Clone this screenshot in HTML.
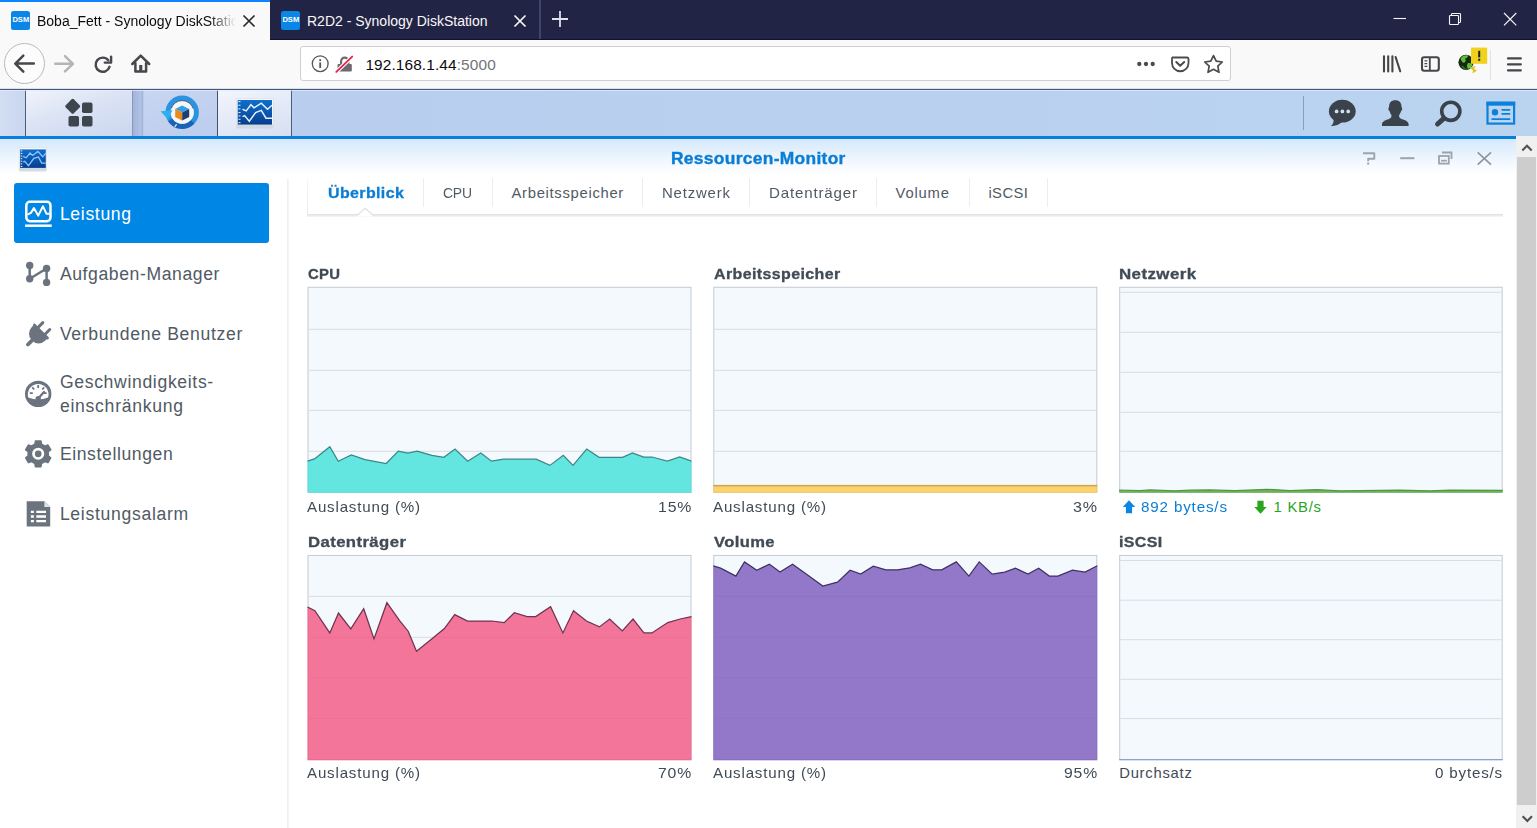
<!DOCTYPE html>
<html><head><meta charset="utf-8"><title>Ressourcen-Monitor</title>
<style>
html,body{margin:0;padding:0;}
body{width:1537px;height:828px;overflow:hidden;background:#fff;position:relative;font-family:"Liberation Sans",sans-serif;}
.abs{position:absolute;}
.t{position:absolute;white-space:nowrap;line-height:1;}
/* browser chrome */
#tabbar{left:0;top:0;width:1537px;height:40px;background:#222445;}
#tab1{left:0;top:0;width:270px;height:40px;background:#f9f9fa;}
#tab1line{left:0;top:0;width:270px;height:2px;background:#0a84ff;}
.fav{width:19.300px;height:19.300px;border-radius:2.500px;background:#0a86e6;}
.fav span{position:absolute;left:0;top:5.100px;width:19.300px;text-align:center;font-size:7.600px;font-weight:bold;color:#fff;letter-spacing:0px;line-height:8px;}
.tabtxt{font-size:14px;top:13.6px;padding-bottom:5px;}
#navbar{left:0;top:40px;width:1537px;height:48px;background:#f9f9fa;}
#navline{left:0;top:88px;width:1537px;height:1px;background:#e0e0e3;}
#urlbar{left:300px;top:46px;width:929px;height:33px;background:#fff;border:1px solid #cfcfd2;border-radius:3px;}
/* DSM */
#taskbar{left:0;top:89px;width:1537px;height:47px;background:linear-gradient(to right,#b9cdee,#b9d0ef 50%,#bad4f0);}
#tbline{left:0;top:136px;width:1516px;height:3px;background:#0a7fd9;}
#winhead{left:0;top:139px;width:1516px;height:40px;background:linear-gradient(#d5e9fc,#e6f2fd 35%,#f8fbff 70%,#ffffff 92%);}
.side{font-size:17.6px;color:#505a64;left:60px;letter-spacing:.62px;}
.tab{font-size:14.8px;color:#505a64;top:185.7px;letter-spacing:.45px;}
.ct{font-size:14.4px;font-weight:bold;color:#414b55;-webkit-text-stroke:.3px #414b55;letter-spacing:.25px;}
.cl{font-size:14.8px;color:#414b55;letter-spacing:.5px;}
.cr{font-size:14.8px;color:#414b55;letter-spacing:.5px;text-align:right;}
.sep{position:absolute;top:178px;width:1px;height:29px;background:#ebedf0;}
#tb1{left:327.7px !important;letter-spacing:0.35px;width:auto !important;text-align:left !important;transform:scaleX(1.0792);transform-origin:0 50%;}
#tb2{left:443.0px !important;letter-spacing:-0.20px;width:auto !important;text-align:left !important;transform:scaleX(0.9400);transform-origin:0 50%;}
#tb3{left:511.5px !important;letter-spacing:0.70px;width:auto !important;text-align:left !important;}
#tb4{left:661.7px !important;letter-spacing:0.80px;width:auto !important;text-align:left !important;transform:scaleX(1.0108);transform-origin:0 50%;}
#tb5{left:768.6px !important;letter-spacing:0.80px;width:auto !important;text-align:left !important;transform:scaleX(1.0227);transform-origin:0 50%;}
#tb6{left:895.6px !important;letter-spacing:0.80px;width:auto !important;text-align:left !important;}
#tb7{left:988.4px !important;letter-spacing:0.44px;width:auto !important;text-align:left !important;}
#wtitle{left:670.8px !important;letter-spacing:0.35px;width:auto !important;text-align:left !important;transform:scaleX(1.0949);transform-origin:0 50%;}
#c1{left:307.6px !important;letter-spacing:0.35px;width:auto !important;text-align:left !important;transform:scaleX(1.0325);transform-origin:0 50%;}
#c2{left:713.6px !important;letter-spacing:0.35px;width:auto !important;text-align:left !important;transform:scaleX(1.1101);transform-origin:0 50%;}
#c3{left:1119.4px !important;letter-spacing:0.35px;width:auto !important;text-align:left !important;transform:scaleX(1.1746);transform-origin:0 50%;}
#c4{left:307.6px !important;letter-spacing:0.35px;width:auto !important;text-align:left !important;transform:scaleX(1.1616);transform-origin:0 50%;}
#c5{left:713.5px !important;letter-spacing:0.35px;width:auto !important;text-align:left !important;transform:scaleX(1.1505);transform-origin:0 50%;}
#c6{left:1119.3px !important;letter-spacing:0.35px;width:auto !important;text-align:left !important;transform:scaleX(1.1104);transform-origin:0 50%;}
#l1{left:307.4px !important;letter-spacing:0.80px;width:auto !important;text-align:left !important;transform:scaleX(1.0204);transform-origin:0 50%;}
#l4{left:307.4px !important;letter-spacing:0.80px;width:auto !important;text-align:left !important;transform:scaleX(1.0204);transform-origin:0 50%;}
#l2{left:713.4px !important;letter-spacing:0.80px;width:auto !important;text-align:left !important;transform:scaleX(1.0204);transform-origin:0 50%;}
#l5{left:713.4px !important;letter-spacing:0.80px;width:auto !important;text-align:left !important;transform:scaleX(1.0204);transform-origin:0 50%;}
#r1{left:658.0px !important;letter-spacing:0.80px;width:auto !important;text-align:left !important;transform:scaleX(1.0697);transform-origin:0 50%;}
#r2{left:1072.9px !important;letter-spacing:0.80px;width:auto !important;text-align:left !important;transform:scaleX(1.0860);transform-origin:0 50%;}
#r4{left:658.1px !important;letter-spacing:0.80px;width:auto !important;text-align:left !important;transform:scaleX(1.0633);transform-origin:0 50%;}
#r5{left:1063.8px !important;letter-spacing:0.80px;width:auto !important;text-align:left !important;transform:scaleX(1.0633);transform-origin:0 50%;}
#n1{left:1140.5px !important;letter-spacing:0.80px;width:auto !important;text-align:left !important;transform:scaleX(1.0276);transform-origin:0 50%;}
#n2{left:1273.5px !important;letter-spacing:0.78px;width:auto !important;text-align:left !important;}
#l6{left:1119.2px !important;letter-spacing:0.76px;width:auto !important;text-align:left !important;}
#r6{left:1434.9px !important;letter-spacing:0.80px;width:auto !important;text-align:left !important;transform:scaleX(1.0241);transform-origin:0 50%;}
#s1{left:59.9px !important;letter-spacing:0.67px;width:auto !important;text-align:left !important;}
#s2{left:59.9px !important;letter-spacing:0.59px;width:auto !important;text-align:left !important;}
#s3{left:59.9px !important;letter-spacing:0.68px;width:auto !important;text-align:left !important;}
#s4{left:59.9px !important;letter-spacing:0.66px;width:auto !important;text-align:left !important;}
#s4b{left:59.9px !important;letter-spacing:0.73px;width:auto !important;text-align:left !important;}
#s5{left:59.9px !important;letter-spacing:0.60px;width:auto !important;text-align:left !important;}
#s6{left:59.9px !important;letter-spacing:0.69px;width:auto !important;text-align:left !important;}
</style></head><body>

<!-- ===== Firefox tab bar ===== -->
<div class="abs" id="tabbar"></div>
<div class="abs" id="tab1"></div>
<div class="abs" id="tab1line"></div>
<div class="abs fav" style="left:11.200px;top:11.200px;"><span>DSM</span></div>
<div class="t tabtxt" id="tt1" style="left:37px;color:#0c0c0d;width:199px;overflow:hidden;-webkit-mask-image:linear-gradient(to right,#000 172px,transparent 199px);">Boba_Fett - Synology DiskStation</div>
<svg class="abs" style="left:242.200px;top:13.900px" width="14" height="14" viewBox="0 0 14 14"><path d="M1.5 1.5 L12.5 12.5 M12.5 1.5 L1.5 12.5" stroke="#2a2a2e" stroke-width="1.7" fill="none"/></svg>

<div class="abs fav" style="left:281.200px;top:11.200px;"><span>DSM</span></div>
<div class="t tabtxt" id="tt2" style="left:307px;color:#f9f9fa;">R2D2 - Synology DiskStation</div>
<svg class="abs" style="left:512.500px;top:13.900px" width="14" height="14" viewBox="0 0 14 14"><path d="M1.5 1.5 L12.5 12.5 M12.5 1.5 L1.5 12.5" stroke="#f9f9fa" stroke-width="1.7" fill="none"/></svg>
<div class="abs" style="left:270px;top:39px;width:1267px;height:1px;background:#10112a;"></div><div class="abs" style="left:539px;top:0;width:2px;height:39px;background:#40436a;"></div>
<svg class="abs" style="left:551px;top:10px" width="18" height="18" viewBox="0 0 18 18"><path d="M9 1 V17 M1 9 H17" stroke="#e2e2e8" stroke-width="1.800" fill="none"/></svg>
<!-- window controls -->
<svg class="abs" style="left:1390px;top:8px" width="140" height="24" viewBox="0 0 140 24">
 <path d="M3.500 10.500 H16" stroke="#f4f4f8" stroke-width="1.100"/>
 <rect x="59.500" y="7.500" width="9" height="9" rx=".8" stroke="#f4f4f8" stroke-width="1.100" fill="none"/>
 <path d="M61.500 7.500 V6.300 a.8 .8 0 0 1 .8 -.8 H69.700 a.8 .8 0 0 1 .8 .8 V13.700 a.8 .8 0 0 1 -.8 .8 H68.500" stroke="#f4f4f8" stroke-width="1.100" fill="none"/>
 <path d="M114 5 L126.300 17.300 M126.300 5 L114 17.300" stroke="#f4f4f8" stroke-width="1.200" fill="none"/>
</svg>

<!-- ===== nav bar ===== -->
<div class="abs" id="navbar"></div>
<div class="abs" id="navline"></div>
<div class="abs" style="left:4px;top:43px;width:39px;height:39px;border:1px solid #b9b9bc;border-radius:50%;background:#fcfcfd;"></div>
<svg class="abs" style="left:0;top:40px" width="170" height="48" viewBox="0 0 170 48">
 <path d="M33.800 23.600 H15.600 M23.300 15.600 L15.300 23.600 L23.300 31.600" stroke="#47474c" stroke-width="2.500" fill="none" stroke-linecap="round" stroke-linejoin="round"/>
 <path d="M55.300 23.800 H72.800 M65 16.200 L72.900 23.800 L65 31.400" stroke="#b4b4b7" stroke-width="2.500" fill="none" stroke-linecap="round" stroke-linejoin="round"/>
 <path d="M108.300 20.300 A7.100 7.100 0 1 0 109.500 26.800" stroke="#47474c" stroke-width="2.400" fill="none" stroke-linecap="round"/>
 <path d="M104.800 22.600 H111.100 V16.600" stroke="#47474c" stroke-width="2.400" fill="none" stroke-linejoin="round" stroke-linecap="round"/>
 <path d="M132.300 24 L140.700 15.600 L149.200 24 M135.400 23.200 V31.600 H146.100 V23.200" stroke="#47474c" stroke-width="2.500" fill="none" stroke-linejoin="round" stroke-linecap="round"/>
 <rect x="139.200" y="25" width="3.100" height="6" fill="#47474c"/>
</svg>
<div class="abs" id="urlbar"></div>
<svg class="abs" style="left:308px;top:52px" width="50" height="24" viewBox="0 0 50 24">
 <circle cx="12.2" cy="11.7" r="7.9" stroke="#55555a" stroke-width="1.3" fill="none"/>
 <rect x="11.3" y="10.4" width="1.8" height="5.6" fill="#55555a"/><rect x="11.3" y="7.2" width="1.8" height="1.9" fill="#55555a"/>
 <rect x="29.5" y="12" width="14.3" height="7.6" rx="1" fill="#6a6a6f"/>
 <path d="M33.1 12.5 V9.3 a3.6 3.6 0 0 1 7.2 0 V12.5" stroke="#6a6a6f" stroke-width="2.2" fill="none"/>
 <path d="M28.3 19.9 L44.2 4.6" stroke="#fff" stroke-width="4"/>
 <path d="M28.3 19.9 L44.2 4.6" stroke="#e22850" stroke-width="1.9" stroke-linecap="round"/>
</svg>
<div class="t" id="url" style="left:365.4px;top:57.2px;font-size:15.4px;color:#0c0c0d;letter-spacing:.12px;">192.168.1.44<span style="color:#737378">:5000</span></div>
<svg class="abs" style="left:1130px;top:52px" width="100" height="24" viewBox="0 0 100 24">
 <circle cx="9.3" cy="12" r="2.15" fill="#4a4a4f"/><circle cx="16" cy="12" r="2.15" fill="#4a4a4f"/><circle cx="22.7" cy="12" r="2.15" fill="#4a4a4f"/>
 <path d="M42.5 5.5 H57 a1.5 1.5 0 0 1 1.5 1.5 V11 a8 8 0 0 1 -16.5 0 V7 a1.5 1.5 0 0 1 .5 -1.5 z" stroke="#4a4a4f" stroke-width="1.8" fill="none"/>
 <path d="M46.3 10 L50.2 13.7 L54.2 10" stroke="#4a4a4f" stroke-width="2" fill="none" stroke-linecap="round" stroke-linejoin="round"/>
 <path d="M83.5 3.6 L86.2 9.2 L92.3 10 L87.8 14.2 L89 20.3 L83.5 17.3 L78 20.3 L79.2 14.2 L74.7 10 L80.8 9.2 Z" stroke="#4a4a4f" stroke-width="1.7" fill="none" stroke-linejoin="round"/>
</svg>
<svg class="abs" style="left:1378px;top:46px" width="155" height="36" viewBox="0 0 155 36">
 <path d="M6 10.300 V25.500 M10.200 10.300 V25.500 M14.400 10.300 V25.500 M17.600 11 L22.200 25.300" stroke="#45454a" stroke-width="2.100" fill="none" stroke-linecap="round"/>
 <rect x="44" y="11.300" width="16.800" height="13.400" rx="2.200" stroke="#45454a" stroke-width="2.100" fill="none"/>
 <path d="M51.800 11.300 V24.700" stroke="#45454a" stroke-width="1.800"/><path d="M46.500 14.800 H49.300 M46.500 17.600 H49.300 M46.500 20.400 H49.300" stroke="#45454a" stroke-width="1.200"/>
 <circle cx="88" cy="16.300" r="7.600" fill="#14290f"/>
 <path d="M82.500 12.500 q3 -4.500 8 -3 q-1 2.500 -3.500 3 q1.500 2 -.5 4 q-2.500 1 -4 -4 z M90 17 q3.500 -.5 4.500 2 q-1.500 3.500 -4.500 4 q-2 -3 0 -6 z" fill="#5fbf3a"/>
 <path d="M84 20 q2 3 5 3.500" stroke="#2f6f22" stroke-width="1.600" fill="none"/>
 <path d="M91.500 21.500 l6 -1.500 l-1.500 3 l3 1.500 l-4.500 3 l.5 -3.300 z" fill="#e3c01a"/>
 <rect x="93" y="1.600" width="16.200" height="16.200" fill="#f0d11c"/><rect x="100.200" y="4.800" width="2" height="6.600" fill="#222"/><rect x="100.200" y="12.700" width="2" height="2.100" fill="#222"/>
 <path d="M112.500 4 V34" stroke="#e2e2e6" stroke-width="1"/>
 <path d="M130 12.400 H142.800 M130 18.400 H142.800 M130 24.400 H142.800" stroke="#45454a" stroke-width="2.200" stroke-linecap="round"/>
</svg>

<!-- ===== DSM taskbar ===== -->
<div class="abs" id="taskbar"></div>
<div class="abs" style="left:0;top:89px;width:25px;height:47px;background:linear-gradient(to right,#d3def3,#c9d6f0);"></div><div class="abs" style="left:25px;top:89px;width:1px;height:47px;background:#4f5c78;"></div>
<div class="abs" style="left:26px;top:89px;width:106px;height:47px;background:linear-gradient(160deg,#f1f4fb,#dbe3f4 45%,#cbd7ef);"></div>
<div class="abs" style="left:132px;top:89px;width:11px;height:47px;background:linear-gradient(to right,#7a8cb0 0,#a3b5d8 14%,#b2c3e4 80%,#9fb1d4 100%);"></div>
<div class="abs" style="left:144px;top:89px;width:1px;height:47px;background:#5c6985;"></div>
<div class="abs" style="left:144px;top:89px;width:73px;height:47px;background:linear-gradient(160deg,#c9d6f1,#c0d0ee 60%,#bccdee);"></div>
<div class="abs" style="left:217px;top:89px;width:1px;height:47px;background:#465068;"></div>
<div class="abs" style="left:218px;top:89px;width:73px;height:47px;background:linear-gradient(160deg,#f3f6fc,#e4eaf7 50%,#d6dff2);"></div>
<div class="abs" style="left:291px;top:89px;width:1px;height:47px;background:#4f5c78;"></div>
<div class="abs" style="left:0;top:88.600px;width:1537px;height:1.200px;background:#3f5888;"></div><div class="abs" style="left:0;top:90px;width:1537px;height:1px;background:#e6edf9;opacity:.75"></div>
<!-- main menu icon -->
<svg class="abs" style="left:60px;top:95.700px" width="40" height="36" viewBox="0 0 40 36">
 <rect x="-5.700" y="-5.700" width="11.400" height="11.400" rx="1.600" transform="translate(12.700,10.300) rotate(45)" fill="#3d454e"/>
 <rect x="22" y="6.5" width="10.5" height="10.5" rx="1.8" fill="#3d454e"/>
 <rect x="8.5" y="20" width="10.5" height="10.5" rx="1.8" fill="#3d454e"/>
 <rect x="22" y="20" width="10.5" height="10.5" rx="1.8" fill="#3d454e"/>
</svg>
<!-- hyper backup icon -->
<svg class="abs" style="left:155px;top:90px" width="52" height="46" viewBox="155 90 52 46">
 <circle cx="182.200" cy="112.200" r="14.100" fill="none" stroke="#2b93e0" stroke-width="5.200"/>
 <path d="M170.300 119.800 A14.100 14.100 0 0 0 192.500 121.800" fill="none" stroke="#1b62b4" stroke-width="5.200"/>
 <circle cx="182.200" cy="112.200" r="11.600" fill="#f3f6fb"/>
 <path d="M171.200 108.500 A11.600 11.600 0 0 1 193.200 108.500" fill="none" stroke="#26384f" stroke-width="1" opacity=".75"/>
 <path d="M160.600 111.200 L172.400 110.200 L168 119.400 Z" fill="#2db0f2"/>
 <path d="M182.200 105.400 L189.200 108.900 L182.200 112.400 L175.200 108.900 Z" fill="#3a9fe2"/>
 <path d="M175.200 108.900 L182.200 112.400 V120.600 L175.200 117.100 Z" fill="#ea8a1a"/>
 <path d="M189.200 108.900 L182.200 112.400 V120.600 L189.200 117.100 Z" fill="#1e3f6f"/>
 <path d="M174.800 126.800 L176.600 124.300" stroke="#e8f3fd" stroke-width="1.200"/>
</svg>
<!-- resource monitor icon (taskbar) -->
<svg class="abs" style="left:232px;top:94px" width="44" height="37" viewBox="232 94 44 37"><defs><linearGradient id="mg1" x1="0" y1="0" x2="0" y2="1"><stop offset="0" stop-color="#0f6fcb"/><stop offset=".55" stop-color="#0b56ac"/><stop offset="1" stop-color="#073c8d"/></linearGradient></defs><rect x="236.9" y="126.2" width="35.7" height="2" fill="#9aa6bd" opacity=".55"/><rect x="236.3" y="98.4" width="36.9" height="29.0" fill="#f5f8fc" stroke="#cdd5e2" stroke-width=".5"/><rect x="236.3" y="124.6" width="36.9" height="2.8" fill="#d3d9e3"/><rect x="237.7" y="100.0" width="34.3" height="24.6" fill="url(#mg1)"/><rect x="238.4" y="101.0" width="2.1" height="1.1" fill="#d5e6fa"/><rect x="238.4" y="104.7" width="2.1" height="1.1" fill="#d5e6fa"/><rect x="238.4" y="108.3" width="2.1" height="1.1" fill="#d5e6fa"/><rect x="238.4" y="112.0" width="2.1" height="1.1" fill="#d5e6fa"/><rect x="238.4" y="115.4" width="2.1" height="1.1" fill="#d5e6fa"/><rect x="238.4" y="118.7" width="2.1" height="1.1" fill="#d5e6fa"/><rect x="238.4" y="122.1" width="2.1" height="1.1" fill="#d5e6fa"/><polyline points="242.5,109.3 246.2,110.9 250.9,104.7 254.0,107.8 261.3,103.1 267.5,109.3 272.0,105.2" fill="none" stroke="#e6f1fc" stroke-width="1.5"/><polyline points="242.5,116.6 244.6,115.6 249.3,121.3 255.6,112.5 261.3,110.4 266.0,118.2 272.0,118.2" fill="none" stroke="#e6f1fc" stroke-width="1.5"/></svg>
<!-- right tray -->
<div class="abs" style="left:1303px;top:96px;width:1px;height:34px;background:#8c9cbc;"></div>
<svg class="abs" style="left:1297px;top:88px" width="240" height="48" viewBox="0 0 240 48">
 <ellipse cx="45.3" cy="23.2" rx="13.4" ry="11.4" fill="#3a424b"/>
 <path d="M36.5 30 Q37.5 35 33.8 38.2 Q41 38 45.5 33.5 Z" fill="#3a424b"/>
 <circle cx="39.6" cy="23.4" r="1.85" fill="#d3dff3"/><circle cx="45.400" cy="23.400" r="1.850" fill="#d3dff3"/><circle cx="51.200" cy="23.400" r="1.850" fill="#d3dff3"/>
 <path d="M98.300 12.200 c4.200 0 6.200 2.600 6.200 6.400 c0 1 .9 1.200 .7 2.600 c-.2 1.300 -1 1.500 -1.300 2.400 c-.4 1.600 -1 2.600 -1.800 3.600 c-.1 2 .6 3 3.200 4 c4.400 1.700 6 2.300 6.300 5 v1.800 h-26.600 v-1.800 c.3 -2.700 1.900 -3.300 6.300 -5 c2.600 -1 3.300 -2 3.200 -4 c-.8 -1 -1.400 -2 -1.800 -3.600 c-.3 -.9 -1.100 -1.100 -1.300 -2.400 c-.2 -1.400 .7 -1.600 .7 -2.600 c0 -3.800 2 -6.400 6.200 -6.400 z" fill="#3a424b"/>
 <circle cx="153.800" cy="23.300" r="9.100" fill="none" stroke="#3a424b" stroke-width="3.600"/>
 <path d="M146.300 30.800 L140.600 36" stroke="#3a424b" stroke-width="5" stroke-linecap="round"/>
 <rect x="190.500" y="14.800" width="26.600" height="20.800" fill="none" stroke="#0c80dd" stroke-width="2.200"/>
 <rect x="189.400" y="13.700" width="28.800" height="4" fill="#0c80dd"/>
 <circle cx="198" cy="24.200" r="3.200" fill="#0c80dd"/>
 <path d="M204.500 21.900 H213.200 M204.500 25.800 H213.200 M194.500 31.200 H213.200" stroke="#0c80dd" stroke-width="1.700"/>
</svg>
<div class="abs" id="tbline"></div>

<!-- ===== window header ===== -->
<div class="abs" id="winhead"></div>
<svg class="abs" style="left:15px;top:143px" width="35" height="31" viewBox="15 143 35 31"><defs><linearGradient id="mg2" x1="0" y1="0" x2="0" y2="1"><stop offset="0" stop-color="#0f6fcb"/><stop offset=".55" stop-color="#0b56ac"/><stop offset="1" stop-color="#073c8d"/></linearGradient></defs><rect x="19.7" y="169.3" width="26.2" height="2" fill="#9aa6bd" opacity=".55"/><rect x="19.1" y="147.4" width="27.4" height="23.1" fill="#f5f8fc" stroke="#cdd5e2" stroke-width=".5"/><rect x="19.1" y="167.9" width="27.4" height="2.6" fill="#d3d9e3"/><rect x="20.1" y="149.4" width="25.7" height="18.5" fill="url(#mg2)"/><rect x="20.8" y="150.3" width="1.5" height="1.1" fill="#d5e6fa"/><rect x="20.8" y="152.9" width="1.5" height="1.1" fill="#d5e6fa"/><rect x="20.8" y="155.5" width="1.5" height="1.1" fill="#d5e6fa"/><rect x="20.8" y="158.1" width="1.5" height="1.1" fill="#d5e6fa"/><rect x="20.8" y="160.7" width="1.5" height="1.1" fill="#d5e6fa"/><rect x="20.8" y="163.3" width="1.5" height="1.1" fill="#d5e6fa"/><rect x="20.8" y="165.9" width="1.5" height="1.1" fill="#d5e6fa"/><polyline points="23.2,156.3 26.2,157.8 30.0,153.0 32.6,155.5 37.9,151.4 42.7,156.8 45.8,153.2" fill="none" stroke="#8cc6ff" stroke-width="1.3"/><polyline points="23.2,161.8 24.7,161.3 28.5,165.6 33.8,158.3 38.4,157.0 41.7,163.1 45.8,163.1" fill="none" stroke="#8cc6ff" stroke-width="1.3"/></svg>
<div class="t" id="wtitle" style="left:670px;top:151px;font-size:15.9px;font-weight:bold;color:#0b7dd4;-webkit-text-stroke:.35px #0b7dd4;letter-spacing:.28px;">Ressourcen-Monitor</div>
<svg class="abs" style="left:1355px;top:146px" width="150" height="26" viewBox="0 0 150 26">
 <path d="M8 7.200 H19.300 V12.700 H13.200 V15.300" stroke="#9ba4ae" stroke-width="1.900" fill="none" stroke-linejoin="round"/><rect x="12.200" y="16.600" width="2" height="2" fill="#9ba4ae"/>
 <path d="M45.200 12.200 H59.400" stroke="#9ba4ae" stroke-width="2"/>
 <path d="M87 6.500 H96.500 V13" stroke="#9ba4ae" stroke-width="1.800" fill="none"/>
 <rect x="84" y="10" width="9.800" height="7.600" fill="none" stroke="#9ba4ae" stroke-width="1.800"/>
 <rect x="86" y="13.800" width="5.800" height="1.800" fill="#9ba4ae"/>
 <path d="M122.700 6.400 L136 18.600 M136 6.400 L122.700 18.600" stroke="#8c959f" stroke-width="1.600" fill="none"/>
</svg>

<!-- ===== sidebar ===== -->
<div class="abs" style="left:287px;top:179px;width:2px;height:649px;background:linear-gradient(to right,#ececec,#f7f7f7);"></div>
<div class="abs" style="left:14px;top:183px;width:255px;height:60px;border-radius:3px;background:#0086e5;"></div>
<div class="t side" id="s1" style="top:206.3px;color:#fff;">Leistung</div>
<div class="t side" id="s2" style="top:266.3px;">Aufgaben-Manager</div>
<div class="t side" id="s3" style="top:326.3px;">Verbundene Benutzer</div>
<div class="t side" id="s4" style="top:374.3px;">Geschwindigkeits-</div>
<div class="t side" id="s4b" style="top:398.3px;">einschränkung</div>
<div class="t side" id="s5" style="top:446.3px;">Einstellungen</div>
<div class="t side" id="s6" style="top:506.3px;">Leistungsalarm</div>
<svg class="abs" style="left:0;top:0" width="70" height="540" viewBox="0 0 70 540">
 <!-- leistung -->
 <rect x="26.3" y="201.8" width="24.2" height="19.4" rx="3.6" fill="none" stroke="#fff" stroke-width="2.5"/>
 <path d="M27.5 214.6 L30.9 212.9 L33.9 208.1 L38.2 215.6 L43 206.3 L46.4 213.7 L49.5 213.7" stroke="#fff" stroke-width="2" fill="none" stroke-linejoin="round"/>
 <path d="M25.1 225.7 H51.7" stroke="#fff" stroke-width="2.5"/>
 <!-- aufgaben -->
 <path d="M29.7 265.5 V278.8 L46.6 268.5 V282.4" stroke="#6b747e" stroke-width="2.5" fill="none" stroke-linejoin="round"/>
 <circle cx="29.7" cy="265.5" r="3.7" fill="#6b747e"/><circle cx="29.7" cy="278.8" r="3.7" fill="#6b747e"/><circle cx="46.6" cy="268.5" r="3.7" fill="#6b747e"/><circle cx="46.6" cy="282.4" r="3.7" fill="#6b747e"/>
 <!-- plug -->
 <g transform="translate(38.6,333.8) rotate(45)" fill="#6b747e" stroke="none">
  <path d="M-9.6 -3.2 H9.6 V0 A9.6 9.6 0 0 1 -9.6 0 Z"/>
  <rect x="-10.6" y="-4.6" width="21.2" height="2.6" rx="1"/>
  <rect x="-6.4" y="-12.4" width="3" height="9" rx="1.5"/>
  <rect x="3.4" y="-12.4" width="3" height="9" rx="1.5"/>
  <rect x="-1.900" y="8" width="3.800" height="9" rx="1.900"/>
 </g>
 <!-- gauge -->
 <circle cx="38.2" cy="393.9" r="13.2" fill="#6b747e"/>
 <path d="M28.3 397.6 A10.4 10.4 0 1 1 48.1 397.6 Q38.2 401.5 28.3 397.6 Z" fill="#fff"/>
 <path d="M29.8 393.2 h3 M32.2 387.4 l2 2.1 M38.2 385 v3 M44.2 387.4 l-2 2.1 M46.600 393.200 h-3" stroke="#6b747e" stroke-width="1.800"/>
 <path d="M38.200 398.500 L44 392" stroke="#6b747e" stroke-width="2.300" stroke-linecap="round"/>
 <circle cx="38.200" cy="398.600" r="2.700" fill="#6b747e"/>
 <!-- gear -->
 <path d="M34.99 444.12 L35.47 440.99 L40.93 440.99 L41.41 444.12 L44.98 446.18 L47.93 445.03 L50.66 449.76 L48.19 451.74 L48.19 455.86 L50.66 457.84 L47.93 462.57 L44.98 461.42 L41.41 463.48 L40.93 466.61 L35.47 466.61 L34.99 463.48 L31.42 461.42 L28.47 462.57 L25.74 457.84 L28.21 455.86 L28.21 451.74 L25.74 449.76 L28.47 445.03 L31.42 446.18 Z" fill="#6b747e" stroke="#6b747e" stroke-width="1.600" stroke-linejoin="round"/>
 <circle cx="38.200" cy="453.800" r="4.700" fill="none" stroke="#fff" stroke-width="2.700"/>
 <!-- list -->
 <path d="M26.700 501.300 H44.400 L50.200 507.100 V526.600 H26.700 Z" fill="#6b747e"/>
 <path d="M44.400 501.300 V507.100 H50.200 Z" fill="#dfe3e7"/>
 <path d="M30.900 511.800 H33.900 M30.900 516.500 H33.900 M30.900 521.200 H33.900 M36.300 511.800 H46 M36.300 516.500 H46 M36.300 521.200 H46" stroke="#fff" stroke-width="2.300"/>
</svg>

<!-- ===== content tabs ===== -->
<div class="abs" style="left:307px;top:214px;width:1196px;height:2.500px;background:linear-gradient(#dde0e4,#e9ebee 55%,#f6f7f8);"></div>
<div class="abs" style="left:307px;top:179px;width:1px;height:36px;background:linear-gradient(#f6f7f9,#e6e8ec);"></div>
<svg class="abs" style="left:354px;top:206px" width="24" height="12" viewBox="354 206 24 12"><path d="M357.200 216.600 L365.200 208.600 L373.200 216.600 Z" fill="#fff"/><path d="M357.600 214.900 L365.200 208.400 L372.800 214.900" stroke="#dde0e4" stroke-width="1.200" fill="none"/></svg>
<div class="t tab" id="tb1" style="left:328px;font-weight:bold;color:#0b7dd4;-webkit-text-stroke:.3px #0b7dd4;">Überblick</div>
<div class="t tab" id="tb2" style="left:443px;">CPU</div>
<div class="t tab" id="tb3" style="left:512px;">Arbeitsspeicher</div>
<div class="t tab" id="tb4" style="left:662px;">Netzwerk</div>
<div class="t tab" id="tb5" style="left:769px;">Datenträger</div>
<div class="t tab" id="tb6" style="left:896px;">Volume</div>
<div class="t tab" id="tb7" style="left:989px;">iSCSI</div>
<div class="sep" style="left:423px"></div><div class="sep" style="left:492px"></div><div class="sep" style="left:642px"></div><div class="sep" style="left:749px"></div><div class="sep" style="left:876px"></div><div class="sep" style="left:969px"></div><div class="sep" style="left:1047px"></div>

<!-- ===== charts ===== -->
<svg class="abs" style="left:0;top:0" width="1537" height="828" viewBox="0 0 1537 828">
<rect x="308.0" y="287.27" width="383" height="205" fill="#f4f9fe" stroke="#c3cad3" stroke-width="1"/><line x1="308.5" x2="690.5" y1="329.3" y2="329.3" stroke="#d9dde2" stroke-width="1"/><line x1="308.5" x2="690.5" y1="370.3" y2="370.3" stroke="#d9dde2" stroke-width="1"/><line x1="308.5" x2="690.5" y1="410.4" y2="410.4" stroke="#d9dde2" stroke-width="1"/><line x1="308.5" x2="690.5" y1="451.3" y2="451.3" stroke="#d9dde2" stroke-width="1"/><polygon points="307.5,492.77 307.5,461.2 314.5,458.9 329.8,446.8 338.3,461.2 351.3,455.0 365.0,459.6 386.2,463.5 398.3,451.1 408.0,453.0 417.2,451.1 431.8,455.3 443.9,457.3 455.0,449.1 467.7,461.2 480.8,453.0 491.5,461.2 503.6,459.2 536.2,459.2 549.9,465.4 563.3,455.3 573.0,465.4 586.7,449.1 599.1,457.3 622.6,457.3 632.4,453.0 643.8,457.0 652.0,457.0 667.3,461.2 679.7,457.0 691.5,461.2 691.5,492.77" fill="#3ee0d8" fill-opacity="0.8"/><polyline points="307.5,461.2 314.5,458.9 329.8,446.8 338.3,461.2 351.3,455.0 365.0,459.6 386.2,463.5 398.3,451.1 408.0,453.0 417.2,451.1 431.8,455.3 443.9,457.3 455.0,449.1 467.7,461.2 480.8,453.0 491.5,461.2 503.6,459.2 536.2,459.2 549.9,465.4 563.3,455.3 573.0,465.4 586.7,449.1 599.1,457.3 622.6,457.3 632.4,453.0 643.8,457.0 652.0,457.0 667.3,461.2 679.7,457.0 691.5,461.2" fill="none" stroke="#3a8689" stroke-width="1.25"/>
<rect x="713.8" y="287.27" width="383" height="205" fill="#f4f9fe" stroke="#c3cad3" stroke-width="1"/><line x1="714.3" x2="1096.3" y1="329.3" y2="329.3" stroke="#d9dde2" stroke-width="1"/><line x1="714.3" x2="1096.3" y1="370.3" y2="370.3" stroke="#d9dde2" stroke-width="1"/><line x1="714.3" x2="1096.3" y1="410.4" y2="410.4" stroke="#d9dde2" stroke-width="1"/><line x1="714.3" x2="1096.3" y1="451.3" y2="451.3" stroke="#d9dde2" stroke-width="1"/><rect x="713.3" y="485.6" width="384" height="7.17" fill="#fdc846" fill-opacity=".8"/><rect x="713.3" y="484.9" width="384" height="1.5" fill="#d0a552"/>
<rect x="1119.7" y="287.27" width="382.5" height="205" fill="#f4f9fe" stroke="#c3cad3" stroke-width="1"/><line x1="1120.2" x2="1501.7" y1="292.3" y2="292.3" stroke="#d9dde2" stroke-width="1"/><line x1="1120.2" x2="1501.7" y1="332.3" y2="332.3" stroke="#d9dde2" stroke-width="1"/><line x1="1120.2" x2="1501.7" y1="372.3" y2="372.3" stroke="#d9dde2" stroke-width="1"/><line x1="1120.2" x2="1501.7" y1="412.3" y2="412.3" stroke="#d9dde2" stroke-width="1"/><line x1="1120.2" x2="1501.7" y1="451.3" y2="451.3" stroke="#d9dde2" stroke-width="1"/><polygon points="1119.2,492.77 1119.2,490.0 1140.0,490.6 1150.0,489.9 1175.0,490.8 1190.0,490.2 1210.0,490.0 1235.0,490.7 1267.0,489.3 1290.0,490.6 1317.0,489.6 1340.0,490.8 1400.0,490.2 1430.0,490.8 1450.0,490.1 1502.7,490.4 1502.7,492.77" fill="#58a83f" fill-opacity="0.85"/><polyline points="1119.2,490.0 1140.0,490.6 1150.0,489.9 1175.0,490.8 1190.0,490.2 1210.0,490.0 1235.0,490.7 1267.0,489.3 1290.0,490.6 1317.0,489.6 1340.0,490.8 1400.0,490.2 1430.0,490.8 1450.0,490.1 1502.7,490.4" fill="none" stroke="#4f9a3c" stroke-width="1.25"/>
<rect x="308.0" y="555.4" width="383" height="204.3" fill="#f4f9fe" stroke="#c3cad3" stroke-width="1"/><line x1="308.5" x2="690.5" y1="596.4" y2="596.4" stroke="#d9dde2" stroke-width="1"/><line x1="308.5" x2="690.5" y1="637.3" y2="637.3" stroke="#d9dde2" stroke-width="1"/><line x1="308.5" x2="690.5" y1="677.6" y2="677.6" stroke="#d9dde2" stroke-width="1"/><line x1="308.5" x2="690.5" y1="718.3" y2="718.3" stroke="#d9dde2" stroke-width="1"/><polygon points="307.5,760.2 307.5,607.0 314.9,610.7 329.8,632.9 338.5,613.0 350.8,628.9 363.7,608.7 374.0,638.9 386.9,602.7 399.6,620.6 408.2,631.2 416.5,651.2 431.1,639.5 444.4,628.6 454.7,614.6 467.6,621.0 491.9,621.0 504.2,622.6 514.4,612.7 527.1,616.6 535.7,616.6 550.6,606.7 562.9,632.9 573.5,610.7 586.5,621.0 599.4,626.9 609.7,619.0 622.3,630.9 633.0,619.0 643.9,632.9 651.9,632.9 667.8,622.6 680.1,619.0 691.5,616.6 691.5,760.2" fill="#f25481" fill-opacity="0.8"/><polyline points="307.5,607.0 314.9,610.7 329.8,632.9 338.5,613.0 350.8,628.9 363.7,608.7 374.0,638.9 386.9,602.7 399.6,620.6 408.2,631.2 416.5,651.2 431.1,639.5 444.4,628.6 454.7,614.6 467.6,621.0 491.9,621.0 504.2,622.6 514.4,612.7 527.1,616.6 535.7,616.6 550.6,606.7 562.9,632.9 573.5,610.7 586.5,621.0 599.4,626.9 609.7,619.0 622.3,630.9 633.0,619.0 643.9,632.9 651.9,632.9 667.8,622.6 680.1,619.0 691.5,616.6" fill="none" stroke="#70334f" stroke-width="1.25"/>
<rect x="713.8" y="555.4" width="383" height="204.3" fill="#f4f9fe" stroke="#c3cad3" stroke-width="1"/><line x1="714.3" x2="1096.3" y1="596.4" y2="596.4" stroke="#d9dde2" stroke-width="1"/><line x1="714.3" x2="1096.3" y1="637.3" y2="637.3" stroke="#d9dde2" stroke-width="1"/><line x1="714.3" x2="1096.3" y1="677.6" y2="677.6" stroke="#d9dde2" stroke-width="1"/><line x1="714.3" x2="1096.3" y1="718.3" y2="718.3" stroke="#d9dde2" stroke-width="1"/><polygon points="713.3,760.2 713.3,565.8 720.6,568.2 735.9,576.1 744.5,561.9 756.8,570.2 769.4,564.2 780.0,572.1 792.6,564.2 806.2,574.1 822.8,586.1 837.5,582.1 850.1,570.2 860.7,574.1 873.3,566.2 885.9,569.8 897.5,569.8 909.8,567.8 920.5,564.2 932.7,569.8 941.7,569.8 956.3,561.9 968.9,576.1 979.2,561.9 992.2,574.1 1004.8,572.1 1015.4,568.2 1028.0,574.1 1038.7,568.2 1049.3,576.1 1057.9,576.1 1072.5,570.2 1085.1,572.1 1097.3,565.8 1097.3,760.2" fill="#7b57bc" fill-opacity="0.8"/><polyline points="713.3,565.8 720.6,568.2 735.9,576.1 744.5,561.9 756.8,570.2 769.4,564.2 780.0,572.1 792.6,564.2 806.2,574.1 822.8,586.1 837.5,582.1 850.1,570.2 860.7,574.1 873.3,566.2 885.9,569.8 897.5,569.8 909.8,567.8 920.5,564.2 932.7,569.8 941.7,569.8 956.3,561.9 968.9,576.1 979.2,561.9 992.2,574.1 1004.8,572.1 1015.4,568.2 1028.0,574.1 1038.7,568.2 1049.3,576.1 1057.9,576.1 1072.5,570.2 1085.1,572.1 1097.3,565.8" fill="none" stroke="#3e3263" stroke-width="1.25"/>
<rect x="1119.7" y="555.4" width="382.5" height="204.3" fill="#f4f9fe" stroke="#c3cad3" stroke-width="1"/><line x1="1120.2" x2="1501.7" y1="560.5" y2="560.5" stroke="#d9dde2" stroke-width="1"/><line x1="1120.2" x2="1501.7" y1="600.2" y2="600.2" stroke="#d9dde2" stroke-width="1"/><line x1="1120.2" x2="1501.7" y1="639.7" y2="639.7" stroke="#d9dde2" stroke-width="1"/><line x1="1120.2" x2="1501.7" y1="679.3" y2="679.3" stroke="#d9dde2" stroke-width="1"/><line x1="1120.2" x2="1501.7" y1="718.6" y2="718.6" stroke="#d9dde2" stroke-width="1"/><line x1="1119.2" x2="1502.7" y1="759.60" y2="759.60" stroke="#8fa0cb" stroke-width="1.3"/>
</svg>
<div class="t ct" id="c1" style="left:308px;top:267.4px;">CPU</div>
<div class="t ct" id="c2" style="left:714px;top:267.4px;">Arbeitsspeicher</div>
<div class="t ct" id="c3" style="left:1120px;top:267.4px;">Netzwerk</div>
<div class="t ct" id="c4" style="left:308px;top:535.4px;">Datenträger</div>
<div class="t ct" id="c5" style="left:714px;top:535.4px;">Volume</div>
<div class="t ct" id="c6" style="left:1120px;top:535.4px;">iSCSI</div>

<div class="t cl" id="l1" style="left:308px;top:500.2px;">Auslastung (%)</div>
<div class="t cr" id="r1" style="left:591px;width:100px;top:500.2px;">15%</div>
<div class="t cl" id="l2" style="left:714px;top:500.2px;">Auslastung (%)</div>
<div class="t cr" id="r2" style="left:997px;width:100px;top:500.2px;">3%</div>
<svg class="abs" style="left:1120px;top:499px" width="160" height="16" viewBox="0 0 160 16">
 <path d="M9 1.300 L15.200 8 H12.100 V14.200 H5.900 V8 H2.800 Z" fill="#0b86e3"/>
 <path d="M140.500 14.700 L146.700 8 H143.600 V1.800 H137.400 V8 H134.300 Z" fill="#27a51f"/>
</svg>
<div class="t cl" id="n1" style="left:1141px;top:500.2px;color:#0b7dd4;">892 bytes/s</div>
<div class="t cl" id="n2" style="left:1273px;top:500.2px;color:#27a51f;">1 KB/s</div>

<div class="t cl" id="l4" style="left:308px;top:765.5px;">Auslastung (%)</div>
<div class="t cr" id="r4" style="left:591px;width:100px;top:765.5px;">70%</div>
<div class="t cl" id="l5" style="left:714px;top:765.5px;">Auslastung (%)</div>
<div class="t cr" id="r5" style="left:997px;width:100px;top:765.5px;">95%</div>
<div class="t cl" id="l6" style="left:1120px;top:765.5px;">Durchsatz</div>
<div class="t cr" id="r6" style="left:1352px;width:150px;top:765.5px;">0 bytes/s</div>

<!-- ===== page scrollbar ===== -->
<div class="abs" style="left:1516px;top:136px;width:21px;height:692px;background:#f0f0f0;"></div>
<div class="abs" style="left:1517px;top:157px;width:19px;height:648px;background:#cdcdcd;"></div>
<svg class="abs" style="left:1516.5px;top:136px" width="20" height="692" viewBox="0 0 20 692">
 <path d="M5.300 14.500 L10 9.800 L14.700 14.500" stroke="#505050" stroke-width="2.100" fill="none"/>
 <path d="M5.600 680.200 L10.300 684.900 L15 680.200" stroke="#505050" stroke-width="2.100" fill="none"/>
</svg>
</body></html>
